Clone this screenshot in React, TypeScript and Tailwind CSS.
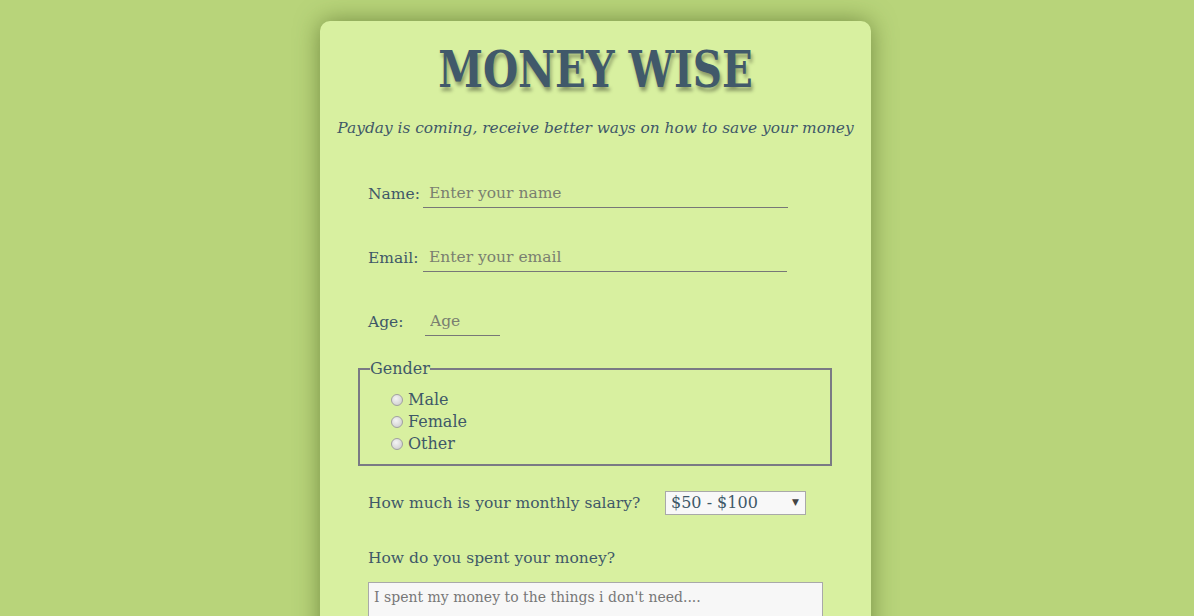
const serif = "font-['DejaVu_Serif','Liberation_Serif',serif]";

const Radio = ({ label }: { label: string }) => (
  <label className="flex items-center h-[22px]">
    <span className="w-[12px] h-[12px] rounded-full border border-[#a0a0a0] bg-[radial-gradient(circle_at_40%_35%,#f4f4f4,#c8c8c8)]" />
    <span className="ml-[5px] text-[16px]">{label}</span>
  </label>
);

export default function App() {
  return (
    <div className={`min-h-screen bg-[#b8d47a] flex justify-center pt-[21px] pr-[3px] overflow-hidden ${serif} text-[#3f5868]`}>
      <div className="w-[551px] h-[680px] bg-[#d8f0a0] rounded-[10px] shadow-[0_0_24px_rgba(60,80,20,0.55)]">
        <h1 className="mt-[18px] text-center font-['DejaVu_Serif_Condensed','DejaVu_Serif',serif] font-bold text-[51px] leading-[60px] text-[#41596a] [text-shadow:2px_4px_4px_rgba(0,0,0,0.35)] scale-x-[0.88]">
          MONEY WISE
        </h1>
        <p className="mt-[18px] text-center italic text-[15.4px] leading-[22px]">
          Payday is coming, receive better ways on how to save your money
        </p>

        <form className="px-[38px] mt-[40px] text-[15.5px]">
          <div className="pl-[10px] flex items-end h-[29px]">
            <span className="leading-[26px] pb-[1px] w-[55px]">Name:</span>
            <input
              className="w-[365px] h-[29px] px-[6px] bg-transparent border-b border-[#777] outline-none placeholder:text-[#7a7f70]"
              placeholder="Enter your name"
            />
          </div>
          <div className="pl-[10px] mt-[35px] flex items-end h-[29px]">
            <span className="leading-[26px] pb-[1px] w-[55px]">Email:</span>
            <input
              className="w-[364px] h-[29px] px-[6px] bg-transparent border-b border-[#777] outline-none placeholder:text-[#7a7f70]"
              placeholder="Enter your email"
            />
          </div>
          <div className="pl-[10px] mt-[35px] flex items-end h-[29px]">
            <span className="leading-[26px] pb-[1px] w-[57px]">Age:</span>
            <input
              className="w-[75px] h-[29px] px-[5px] bg-transparent border-b border-[#777] outline-none placeholder:text-[#7a7f70]"
              placeholder="Age"
            />
          </div>

          <fieldset className="mt-[23px] w-[474px] border-2 border-[#7a7a84] px-0 pt-[10px] pb-[9px]">
            <legend className="ml-[10px] px-0 text-[16px] leading-[20px]">Gender</legend>
            <div className="pl-[31px]">
              <Radio label="Male" />
              <Radio label="Female" />
              <Radio label="Other" />
            </div>
          </fieldset>

          <div className="pl-[10px] mt-[25px] flex items-center h-[24px]">
            <span className="w-[297px] pt-[2px]">How much is your monthly salary?</span>
            <div className="relative w-[141px] h-[24px] bg-[#f8f8f8] border border-[#a9a9a9] flex items-center pl-[5px] text-[16px]">
              $50 - $100
              <span className="absolute right-[6px] top-[4px] text-[9px] text-[#444]">▼</span>
            </div>
          </div>

          <p className="pl-[10px] mt-[31px] leading-[24px]">How do you spent your money?</p>

          <div className="ml-[10px] mt-[12px] w-[455px] h-[90px] bg-[#f7f7f7] border border-[#a9a9a9] px-[5px] pt-[4px] text-[14px] text-[#777]">
            I spent my money to the things i don't need....
          </div>
        </form>
      </div>
    </div>
  );
}
